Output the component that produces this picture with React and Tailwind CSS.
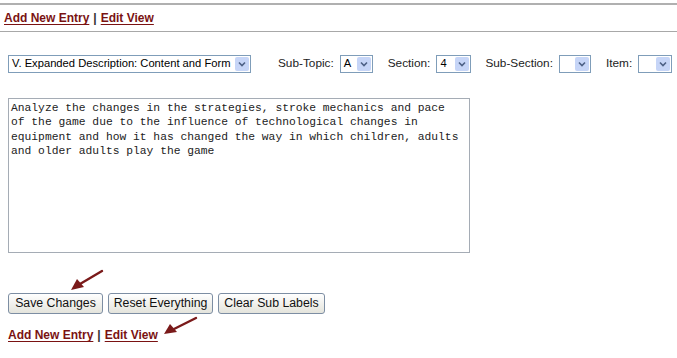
import React from 'react';

const linkFont = { fontFamily: '"Liberation Sans", Arial, sans-serif' };

function Links() {
  return (
    <div className="flex items-center whitespace-nowrap text-[12px] font-bold text-[#7a1212]" style={linkFont}>
      <a className="underline underline-offset-2" href="#">Add New Entry</a>
      <span className="mx-[4px] text-[#333]">|</span>
      <a className="underline underline-offset-2" href="#">Edit View</a>
    </div>
  );
}

function FakeSelect({ value, width }) {
  return (
    <div
      className="flex h-[18px] shrink-0 items-center border border-[#7f9db9] bg-white"
      style={{ width }}
    >
      <span className="min-w-0 flex-1 whitespace-nowrap pl-[3px] text-[11.2px] leading-none text-black">
        {value}
      </span>
      <span className="mr-[1px] flex h-[14px] w-[14px] shrink-0 items-center justify-center rounded-[2px] bg-[#c6d5f7]">
        <svg width="8" height="6" viewBox="0 0 8 6">
          <path d="M1 1.5 L4 4.5 L7 1.5" fill="none" stroke="#4d6185" strokeWidth="1.6" />
        </svg>
      </span>
    </div>
  );
}

function Field({ label, value, width, ml }) {
  return (
    <div className={`flex shrink-0 items-center ${ml}`}>
      <span className="mr-[6px] whitespace-nowrap text-[11.8px] text-[#222]">{label}</span>
      <FakeSelect value={value} width={width} />
    </div>
  );
}

function Button({ children, width }) {
  return (
    <button
      className="h-[21px] whitespace-nowrap rounded-[3px] border border-[#7d8ea3] bg-gradient-to-b from-white to-[#e4e4dc] text-[12.3px] leading-none text-[#111]"
      style={{ width }}
    >
      {children}
    </button>
  );
}

export default function App() {
  const text =
    'Analyze the changes in the strategies, stroke mechanics and pace\nof the game due to the influence of technological changes in\nequipment and how it has changed the way in which children, adults\nand older adults play the game';
  return (
    <div className="relative h-[358px] w-[677px] overflow-hidden bg-white" style={linkFont}>
      <div className="mt-[3px] border-t-2 border-[#b0b0b0]" />
      <div className="flex h-[26px] items-center pl-[4px]">
        <Links />
      </div>
      <div className="border-t border-[#a8a8a8]" />

      <div className="mt-[23px] flex items-center pl-[8px]">
        <FakeSelect value="V. Expanded Description: Content and Form" width={243} />
        <Field label="Sub-Topic:" value="A" width={33} ml="ml-[27px]" />
        <Field label="Section:" value="4" width={35} ml="ml-[15px]" />
        <Field label="Sub-Section:" value="" width={32} ml="ml-[14px]" />
        <Field label="Item:" value="" width={34} ml="ml-[15px]" />
      </div>

      <div className="mt-[25px] pl-[8px]">
        <textarea
          className="block h-[155px] w-[462px] resize-none border border-[#a5acb5] px-[2px] pt-[2px] text-[11.3px] leading-[14.3px] text-[#222] outline-none"
          style={{ fontFamily: '"Liberation Mono", "Courier New", monospace' }}
          defaultValue={text}
        />
      </div>

      <div className="mt-[40px] flex gap-[5px] pl-[8px]">
        <Button width={95}>Save Changes</Button>
        <Button width={105}>Reset Everything</Button>
        <Button width={107}>Clear Sub Labels</Button>
      </div>

      <div className="mt-[12px] pl-[8px]">
        <Links />
      </div>

      <svg className="pointer-events-none absolute left-[66px] top-[268px]" width="40" height="26" viewBox="0 0 40 26">
        <line x1="36" y1="3" x2="14" y2="16" stroke="#7a1a1a" strokeWidth="2.4" strokeLinecap="round" />
        <polygon points="5,22 11,11 18,19" fill="#7a1a1a" />
      </svg>
      <svg className="pointer-events-none absolute left-[160px] top-[315px]" width="40" height="24" viewBox="0 0 40 24">
        <line x1="36" y1="3" x2="14" y2="14" stroke="#7a1a1a" strokeWidth="2.4" strokeLinecap="round" />
        <polygon points="4,19 10,9 17,17" fill="#7a1a1a" />
      </svg>
    </div>
  );
}
